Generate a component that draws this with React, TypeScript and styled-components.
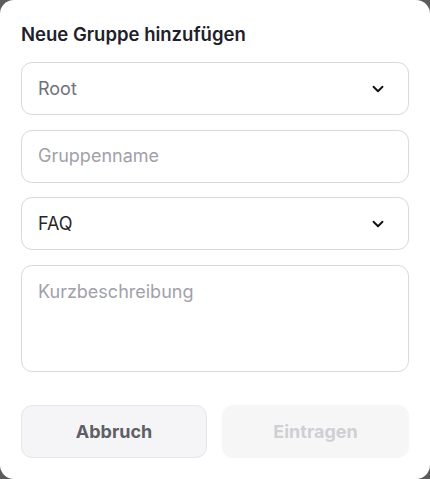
import React from "react";
import styled, { createGlobalStyle } from "styled-components";
import { ChevronDown } from "lucide-react";

const Global = createGlobalStyle`
  html, body { margin: 0; padding: 0; background: #5c5c5c; }
  body { font-family: Inter, "Noto Sans", sans-serif; }
  * { box-sizing: border-box; }
`;

const Dialog = styled.div`
  width: 430px;
  height: 479px;
  background: #ffffff;
  border-radius: 14px;
  padding: 22px 21px 0 21px;
  display: flex;
  flex-direction: column;
`;

const Title = styled.h2`
  margin: 0 0 16px 0;
  font-size: 18.5px;
  line-height: 24px;
  font-weight: 600;
  color: #20202a;
`;

const Fields = styled.div`
  display: flex;
  flex-direction: column;
  gap: 14.5px;
`;

const Field = styled.div<{ $tall?: boolean }>`
  height: ${(p) => (p.$tall ? "107px" : "53px")};
  border: 1px solid #d9d9de;
  border-radius: 11px;
  padding: ${(p) => (p.$tall ? "14px 16px" : "0 16px")};
  display: flex;
  align-items: ${(p) => (p.$tall ? "flex-start" : "center")};
  justify-content: space-between;
  background: #fff;
`;

const Value = styled.span<{ $tone: "muted" | "dark" | "placeholder" }>`
  font-size: 18px;
  line-height: 24px;
  color: ${(p) =>
    p.$tone === "dark" ? "#27272a" : p.$tone === "muted" ? "#71717a" : "#a1a1aa"};
`;

const Chevron = styled(ChevronDown)`
  width: 18px;
  height: 18px;
  color: #111;
  margin-right: 5px;
`;

const Actions = styled.div`
  margin-top: 33px;
  display: grid;
  grid-template-columns: 186px 187px;
  gap: 15px;
`;

const Button = styled.button<{ $disabled?: boolean }>`
  height: 53px;
  border-radius: 11px;
  border: 1px solid ${(p) => (p.$disabled ? "#f6f6f7" : "#e6e6ea")};
  background: ${(p) => (p.$disabled ? "#f6f6f7" : "#f5f5f7")};
  color: ${(p) => (p.$disabled ? "#cfcfd4" : "#5f5f66")};
  font-family: Inter, "Noto Sans", sans-serif;
  font-size: 18px;
  font-weight: 700;
  padding: 0;
`;

export default function App() {
  return (
    <>
      <Global />
      <Dialog>
        <Title>Neue Gruppe hinzufügen</Title>
        <Fields>
          <Field>
            <Value $tone="muted">Root</Value>
            <Chevron strokeWidth={2.5} />
          </Field>
          <Field>
            <Value $tone="placeholder">Gruppenname</Value>
          </Field>
          <Field>
            <Value $tone="dark">FAQ</Value>
            <Chevron strokeWidth={2.5} />
          </Field>
          <Field $tall>
            <Value $tone="placeholder">Kurzbeschreibung</Value>
          </Field>
        </Fields>
        <Actions>
          <Button>Abbruch</Button>
          <Button $disabled>Eintragen</Button>
        </Actions>
      </Dialog>
    </>
  );
}
